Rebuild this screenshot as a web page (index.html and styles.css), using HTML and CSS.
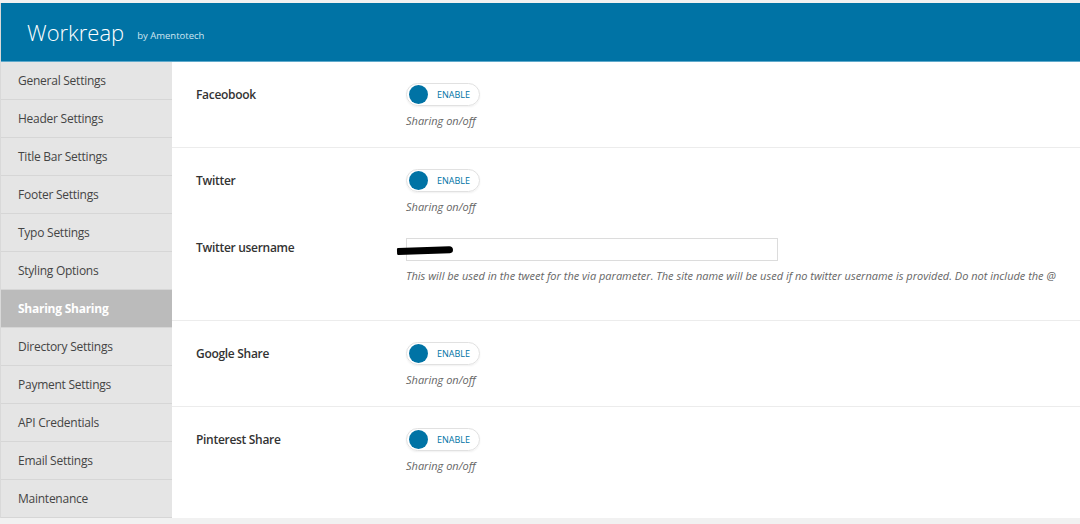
FILE: index.html
```html
<!DOCTYPE html>
<html lang="en">
<head>
    <meta charset="UTF-8">
    <title>Workreap Options</title>
    <link rel="stylesheet" href="styles.css">
</head>
<body>
    <div class="panel">
        <!-- Top brand bar -->
        <div class="header">
            <span class="brand">Workreap</span>
            <span class="by">by Amentotech</span>
        </div>

        <div class="layout">
            <!-- Section menu -->
            <ul class="sidebar">
                <li>General Settings</li>
                <li>Header Settings</li>
                <li>Title Bar Settings</li>
                <li>Footer Settings</li>
                <li>Typo Settings</li>
                <li>Styling Options</li>
                <li class="active">Sharing Sharing</li>
                <li>Directory Settings</li>
                <li>Payment Settings</li>
                <li>API Credentials</li>
                <li>Email Settings</li>
                <li>Maintenance</li>
            </ul>

            <!-- Options -->
            <div class="main">
                <div class="section">
                    <div class="field">
                        <div class="label">Faceobook</div>
                        <div class="control">
                            <div class="toggle"><span class="knob"></span><span class="state">Enable</span></div>
                            <p class="desc">Sharing on/off</p>
                        </div>
                    </div>
                </div>

                <div class="section">
                    <div class="field">
                        <div class="label">Twitter</div>
                        <div class="control">
                            <div class="toggle"><span class="knob"></span><span class="state">Enable</span></div>
                            <p class="desc">Sharing on/off</p>
                        </div>
                    </div>
                    <div class="field field-text">
                        <div class="label">Twitter username</div>
                        <div class="control">
                            <div class="text-input"><span class="redact"></span></div>
                            <p class="desc">This will be used in the tweet for the via parameter. The site name will be used if no twitter username is provided. Do not include the @</p>
                        </div>
                    </div>
                </div>

                <div class="section">
                    <div class="field">
                        <div class="label">Google Share</div>
                        <div class="control">
                            <div class="toggle"><span class="knob"></span><span class="state">Enable</span></div>
                            <p class="desc">Sharing on/off</p>
                        </div>
                    </div>
                </div>

                <div class="section last">
                    <div class="field">
                        <div class="label">Pinterest Share</div>
                        <div class="control">
                            <div class="toggle"><span class="knob"></span><span class="state">Enable</span></div>
                            <p class="desc">Sharing on/off</p>
                        </div>
                    </div>
                </div>
            </div>
        </div>
    </div>
</body>
</html>
```

FILE: styles.css
```css
body {
    margin: 0;
    padding-top: 3px;
    background: #f1f1f1;
    font-family: "Open Sans", Arial, sans-serif;
    color: #444;
}
.panel {
    height: 515px;
    border-left: 1px solid #d9d9d9;
    display: flex;
    flex-direction: column;
}
.header {
    height: 59px;
    box-sizing: border-box;
    background: #0073a5;
    border-bottom: 1px solid #5fa9cb;
    padding: 0 0 0 26px;
    display: flex;
    align-items: center;
    color: #fff;
}
.brand {
    font-size: 22px;
    font-weight: 300;
}
.by {
    font-size: 9.5px;
    margin: 7px 0 0 13px;
    color: #cfe6f1;
}
.layout {
    display: flex;
    flex: 1;
}
.sidebar {
    width: 171px;
    margin: 0;
    padding: 0;
    list-style: none;
    background: #e5e5e5;
}
.sidebar li {
    height: 38px;
    box-sizing: border-box;
    border-bottom: 1px solid #d6d6d6;
    padding: 0 0 0 17px;
    display: flex;
    align-items: center;
    font-size: 12px;
    letter-spacing: -0.25px;
    color: #444;
}
.sidebar li.active {
    background: #bbbbbb;
    color: #fff;
    font-weight: 700;
}
.main {
    flex: 1;
    background: #fff;
}
.section {
    border-bottom: 1px solid #ececec;
    padding: 21px 0 19px 24px;
}
.section.last {
    border-bottom: none;
}
.field {
    display: grid;
    grid-template-columns: 210px 1fr;
}
.field-text {
    margin: 24px 0 18px;
}
.label {
    font-size: 12px;
    font-weight: 600;
    letter-spacing: -0.3px;
    color: #333;
    padding-top: 3px;
}
.field-text .label {
    padding-top: 1px;
}
.toggle {
    width: 68px;
    height: 21px;
    border: 1px solid #e1e1e1;
    border-radius: 12px;
    box-shadow: 0 1px 2px rgba(0, 0, 0, 0.06);
    display: flex;
    align-items: center;
    padding: 0 2px;
}
.knob {
    width: 19px;
    height: 19px;
    border-radius: 50%;
    background: #0073a5;
}
.state {
    margin-left: 9px;
    font-size: 9px;
    text-transform: uppercase;
    color: #0073a5;
}
.desc {
    margin: 7px 0 0;
    font-size: 11px;
    font-style: italic;
    color: #666;
}
.text-input {
    width: 372px;
    height: 23px;
    box-sizing: border-box;
    border: 1px solid #dcdcdc;
    display: flex;
    align-items: center;
}
.redact {
    display: block;
    width: 56px;
    height: 7px;
    margin: 2px 0 0 -10px;
    background: #000;
    border-radius: 2px 6px 5px 2px;
    transform: rotate(-2deg);
}
.field-text .desc {
    margin-top: 7px;
}
```
